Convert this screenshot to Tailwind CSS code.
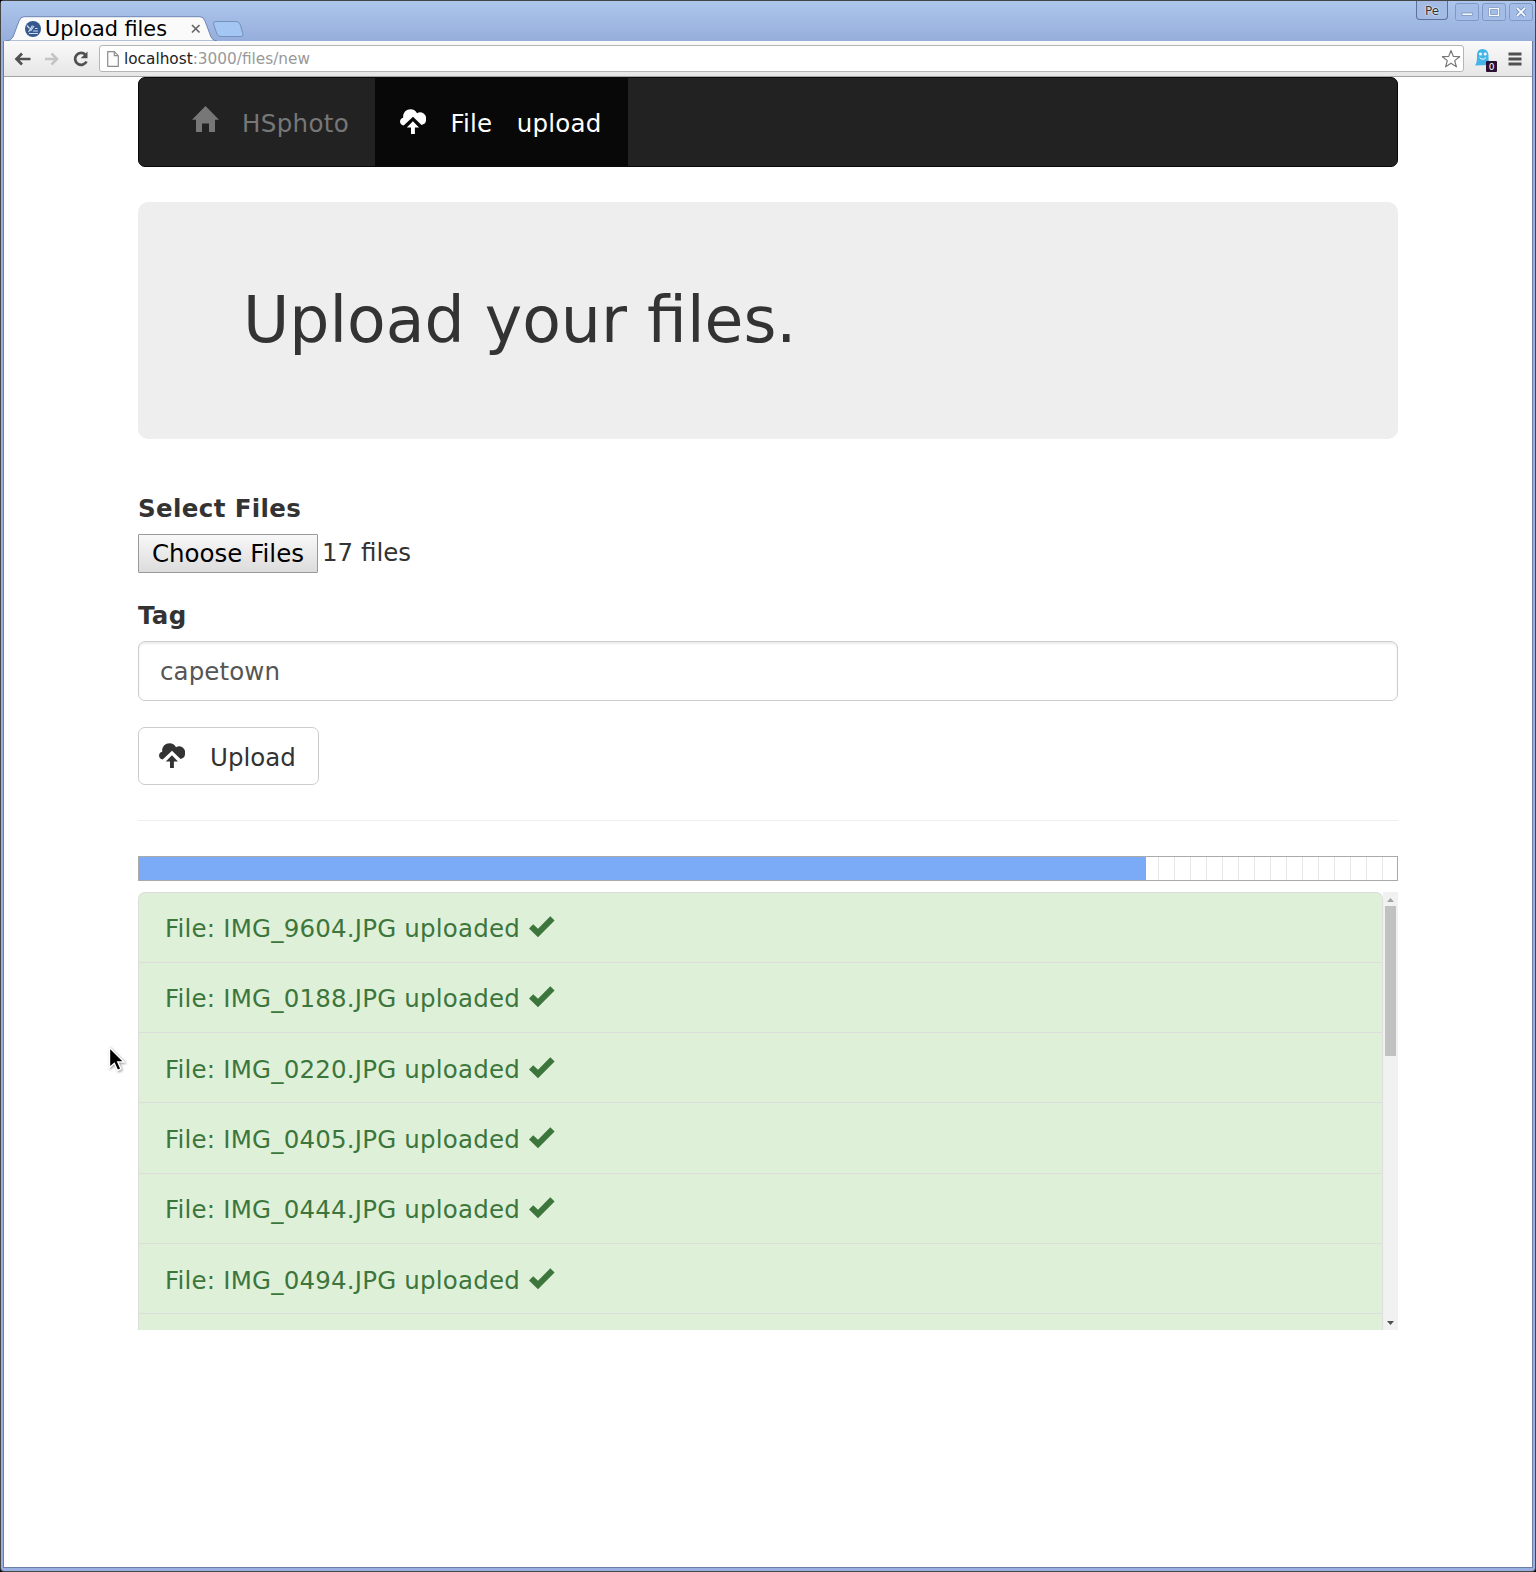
<!DOCTYPE html>
<html lang="en">
<head>
<meta charset="utf-8">
<title>Upload files</title>
<script src="https://cdn.jsdelivr.net/npm/@tailwindcss/browser@4"></script>
</head>
<body class="w-[1536px] h-[1572px] overflow-hidden bg-black font-['DejaVu_Sans',sans-serif] text-[24.5px] leading-[35px] text-[#333]">
<svg class="hidden">
  <symbol id="cloud" viewBox="0 0 26 26"><path fill="currentColor" d="M3.700 16.600A4.300 4.300 0 0 1 0 12.600 4.300 4.300 0 0 1 3.200 8.700 C2.600 4 6 .3 10.500.3 C13.500.3 15.700 1.800 17 4.200 A5.900 5.900 0 0 1 26 10 5.600 5.600 0 0 1 21.500 16L13 7.800Z"/><path fill="currentColor" d="M12.900 12.200 19 18.600H14.900V24.900H11V18.600H6.800Z"/></symbol>
  <symbol id="check" viewBox="0 0 26 22"><path fill="currentColor" d="M21.300.3 25.600 4.600 9 21.300 0 12.600 4.200 8.300 9 12.800Z"/></symbol>
</svg>
<div class="h-[1572px] border border-[#454545] rounded-[4px] bg-[#98b0df] relative flex flex-col">
  <header class="h-10 shrink-0 bg-linear-to-b from-[#adc6ec] to-[#96aedb] relative flex">
    <svg class="absolute left-0 top-0" width="260" height="40">
      <path d="M4.500 40 Q10 40 12 36 L18 20 Q19.500 15.700 23 15.700 H199 Q202.500 15.700 204 20 L210 36 Q212 40 216 40Z" fill="#fafafa" stroke="#6f86b5"/>
      <path d="M215 20.500H235Q238 20.500 239 23L242 33Q242.500 35.500 240 35.500H220Q217 35.500 216 33L212.500 23Q212 20.500 215 20.500Z" fill="#a3c6f3" stroke="#7690bd"/>
      <circle cx="32" cy="28" r="8" fill="#35598f"/>
      <path d="M26 24.500l2.500 3M31.500 24.500l-4 6.500M33 25l-3.500 5M28 32.500h9M32 30h5M34 27.500h2.500" fill="none" stroke="#cfdcec" stroke-width="1.200"/>
      <path d="M191 24l7.500 7.500M198.500 24l-7.500 7.500" stroke="#666" stroke-width="1.700"/>
    </svg>
    <span class="relative ml-[44px] mt-4 text-[20.800px] leading-6 text-black whitespace-nowrap">Upload files</span>
    <div class="ml-auto flex items-start gap-[3px] pr-[2px]">
      <span class="relative w-8 h-[19px] mr-1 border border-t-0 border-[#5f719a] rounded-b-[4px] bg-[#a4bce4] text-[12px] leading-[21px] text-center text-[#333] [text-shadow:0_0_2px_white,0_0_1px_white]">Pe</span>
      <svg class="mt-0.5" width="24" height="18"><rect x=".5" y=".5" width="23" height="17" rx="2" fill="#a3bde7" stroke="#7f98c6"/><rect x="7" y="10" width="10.500" height="2.500" fill="#f4f8ff" stroke="#7088b7" stroke-width=".7"/></svg>
      <svg class="mt-0.5" width="24" height="18"><rect x=".5" y=".5" width="23" height="17" rx="2" fill="#a3bde7" stroke="#7f98c6"/><rect x="7.500" y="5.500" width="9" height="7" rx="1" fill="none" stroke="#7088b7" stroke-width="3"/><rect x="7.500" y="5.500" width="9" height="7" fill="none" stroke="#f4f8ff" stroke-width="1.500"/></svg>
      <svg class="mt-0.5" width="24" height="18"><rect x=".5" y=".5" width="23" height="17" rx="2" fill="#a3bde7" stroke="#7f98c6"/><path d="M8 5l8 8M16 5l-8 8" stroke="#7088b7" stroke-width="3.500"/><path d="M8 5l8 8M16 5l-8 8" stroke="#f4f8ff" stroke-width="1.800"/></svg>
    </div>
  </header>
  <div class="mx-[2px] mb-[3px] grow flex flex-col border border-[#6c7ea8] border-t-0 bg-white">
    <div class="h-9 shrink-0 bg-linear-to-b from-[#fafafa] to-[#e6e6e6] border-b border-[#a5a5a5] flex items-center">
      <svg class="ml-[9px] shrink-0" width="80" height="26" fill="none">
        <path d="M3 13H17.500M9 7.500 3.500 13 9 18.500" stroke="#505050" stroke-width="2.700"/>
        <path d="M32 13H44.500M38.500 7.500 44 13 38.500 18.500" stroke="#c4c4c4" stroke-width="2.500"/>
        <path d="M72.500 8.800A6 6 0 1 0 73.500 15.500" stroke="#505050" stroke-width="2.700"/><path d="M74.500 5.500V12.300H67.700Z" fill="#505050"/>
      </svg>
      <div class="ml-[6px] w-[1365px] h-[27px] rounded-[3px] border border-[#b5b5b5] bg-white flex items-center">
        <svg class="ml-[7px]" width="12" height="16"><path d="M.7.700H7.300L11.300 4.700V15.300H.7ZM7.300.7V4.700H11.300" fill="#fcfcfc" stroke="#8c8c8c" stroke-width="1.200"/></svg>
        <span class="ml-[5px] text-[15.300px] leading-5 text-[#999] whitespace-nowrap"><span class="text-[#222]">localhost</span>:3000/files/new</span>
        <svg class="ml-auto mr-[2px]" width="20" height="20"><path d="M10 1.500 12.300 7.400 18.600 7.700 13.700 11.600 15.400 17.800 10 14.300 4.600 17.800 6.300 11.600 1.400 7.700 7.700 7.400Z" fill="white" stroke="#777" stroke-width="1.200" stroke-linejoin="round"/></svg>
      </div>
      <svg class="ml-[10px] shrink-0" width="26" height="28"><path d="M1 20.500Q3 18 3 12V10Q3 4 8.500 4T14.500 10V14L15.500 20Z" fill="#44b5e8"/><circle cx="6.500" cy="9" r="1.500" fill="white"/><circle cx="11.200" cy="9" r="1.500" fill="white"/><path d="M5.500 12.500Q9 16 12 12.500" stroke="white" fill="none"/><rect x="12" y="16" width="11" height="11" rx="1" fill="#2c1033"/><text x="17.500" y="25" font-size="9" text-anchor="middle" fill="white">0</text></svg>
      <svg class="ml-[8px] shrink-0" width="14" height="16"><path d="M.5 3H13.500M.5 8H13.500M.5 13H13.500" stroke="#505050" stroke-width="2.800"/></svg>
    </div>
    <main class="w-[1260px] ml-[134px] flex flex-col">
      <nav class="h-[90px] shrink-0 flex bg-[#222] border border-[#080808] rounded-[7px] overflow-hidden">
        <a class="w-[236px] pl-[53px] flex items-center text-[#777]">
          <svg class="shrink-0 w-[27px] h-[26px] -mt-1.5" viewBox="0 0 27 26"><path fill="currentColor" d="M13.500 0 27 13.800H23V26H17V17.500H10V26H4V13.800H0Z"/></svg>
          <span class="ml-[23px] mt-[3px] tracking-[.35px]">HSphoto</span>
        </a>
        <a class="w-[253px] pl-[25px] flex items-center bg-[#080808] text-white">
          <svg class="shrink-0 w-[26px] h-[26px]"><use href="#cloud"/></svg>
          <span class="ml-[24.500px] mt-[3px] tracking-[.2px]">File</span><span class="ml-[24.500px] mt-[3px] tracking-[.2px]">upload</span>
        </a>
      </nav>
      <section class="mt-[35px] h-[237px] shrink-0 rounded-[10px] bg-[#eee] pl-[105px] pt-[84px]">
        <h1 class="text-[63.250px] leading-[69px] whitespace-nowrap">Upload your files.</h1>
      </section>
      <form class="flex flex-col items-start">
        <label class="mt-[51.500px] font-bold h-[35px] tracking-[.37px]">Select Files</label>
        <div class="mt-2 h-[39px] flex items-center">
          <button type="button" class="w-[180px] h-[39px] border border-[#999] rounded-[1px] bg-linear-to-b from-[#f8f8f8] to-[#dcdcdc] text-black leading-[35px] whitespace-nowrap">Choose Files</button>
          <span class="ml-1 -mt-0.5">17 files</span>
        </div>
        <label class="mt-[25px] font-bold h-[35px] tracking-[.3px]">Tag</label>
        <div class="mt-2 w-full h-[60px] border border-[#ccc] rounded-[7px] px-[21px] flex items-center text-[#555] shadow-[inset_0_2px_2px_rgba(0,0,0,0.075)]"><span class="mt-0.5 tracking-[.1px]">capetown</span></div>
        <button type="button" class="mt-[26px] w-[181px] h-[58px] border border-[#ccc] rounded-[7px] pl-[20px] flex items-center">
          <svg class="shrink-0 w-[26px] h-[26px]"><use href="#cloud"/></svg><span class="ml-[25px] mt-[3px]">Upload</span>
        </button>
      </form>
      <div class="mt-[35px] h-px bg-[#eee]"></div>
      <div class="mt-[35px] h-[25px] border border-[#aaa] flex">
        <div class="w-[1007px] bg-[#7baaf7]"></div>
        <div class="grow bg-[repeating-linear-gradient(90deg,transparent_0_12px,#e6e6e6_12px_13px,transparent_13px_16px)]"></div>
      </div>
      <div class="mt-[11px] h-[438px] flex overflow-hidden">
        <ul id="files" class="grow border-x border-t border-[#ddd] rounded-t-[7px] bg-[#dff0d8] text-[#3c763d] overflow-hidden"></ul>
        <div class="w-[15px] bg-[#f1f1f1] flex flex-col items-center">
          <svg width="15" height="14"><path d="M4 10 7.500 6 11 10Z" fill="#a3a3a3"/></svg>
          <div class="w-[11px] h-[150px] bg-[#c1c1c1]"></div>
          <svg class="mt-auto" width="15" height="14"><path d="M4 5H11L7.500 9Z" fill="#505050"/></svg>
        </div>
      </div>
    </main>
  </div>
</div>
<svg class="absolute left-[108px] top-[1046px] drop-shadow-[1px_1px_1px_rgba(0,0,0,0.4)]" width="18" height="28"><path d="M1.500 1.500V21.500L6.300 17.300 9.500 24.500 13 23 9.800 16H16Z" fill="black" stroke="white" stroke-width="1.400"/></svg>
<script>
const names = ['9604', '0188', '0220', '0405', '0444', '0494'];
document.getElementById('files').innerHTML = names.map(n =>
  `<li class="h-[70.3px] border-b border-[#ddd] pl-[26px] flex items-center whitespace-nowrap"><span class="mt-[3px] tracking-[.2px]">File: IMG_${n}.JPG uploaded</span><svg class="ml-[9px] w-[26px] h-[22px]"><use href="#check"/></svg></li>`).join('');
</script>
</body>
</html>
